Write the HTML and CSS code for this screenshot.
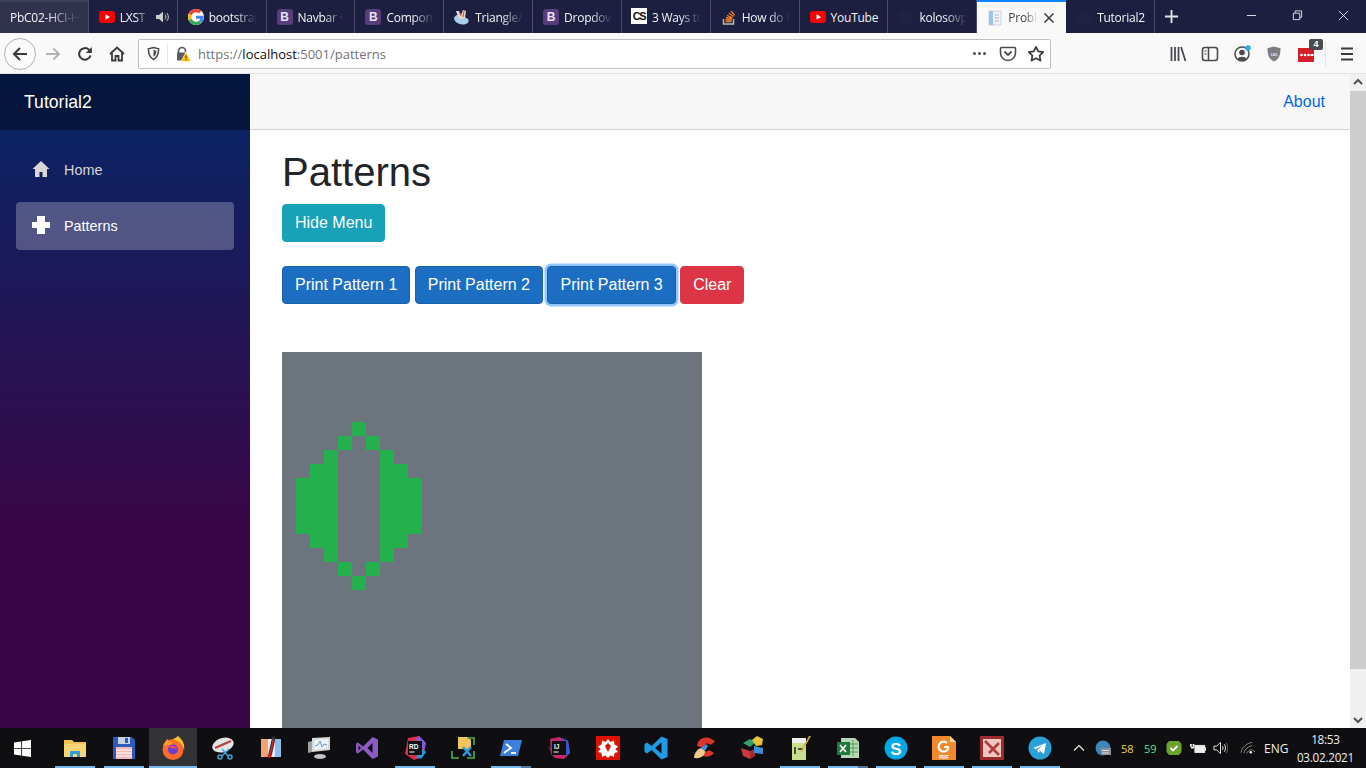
FILE: index.html
```html
<!DOCTYPE html>
<html lang="en">
<head>
<meta charset="utf-8">
<title>Tutorial2</title>
<link rel="stylesheet" href="styles.css">
</head>
<body>
<div class="desktop">
  <div class="tabbar">
    <div class="tab tab-hover"><span class="tab-title">PbC02-HCI-H</span></div>
    <div class="tab">
      <svg class="fav" viewBox="0 0 16 16"><rect y="2" width="16" height="12" rx="3" fill="#f00"/><path d="M6.5 5.2v5.6L11 8z" fill="#fff"/></svg>
      <span class="tab-title tab-title-short">LXST</span>
      <svg class="speaker" viewBox="0 0 14 14"><path d="M1 5h3l4-3.5v11L4 9H1z" fill="#ccc"/><path d="M10 4.5c1.2 1.4 1.2 3.6 0 5M11.8 3c2 2.2 2 5.800 0 8" fill="none" stroke="#ccc"/></svg>
    </div>
    <div class="tab">
      <svg class="fav" viewBox="0 0 48 48"><circle cx="24" cy="24" r="24" fill="#fff"/><path fill="#EA4335" d="M24 9.500c3.540 0 6.710 1.220 9.210 3.600l6.850-6.850C35.900 2.380 30.470 0 24 0 14.620 0 6.510 5.380 2.560 13.220l7.980 6.190C12.430 13.720 17.740 9.500 24 9.500z"/><path fill="#4285F4" d="M46.980 24.550c0-1.570-.15-3.090-.38-4.550H24v9.020h12.940c-.58 2.960-2.260 5.480-4.780 7.180l7.730 6c4.510-4.180 7.090-10.360 7.090-17.650z"/><path fill="#FBBC05" d="M10.530 28.590c-.48-1.450-.76-2.990-.76-4.590s.27-3.140.76-4.590l-7.980-6.190C.92 16.460 0 20.120 0 24c0 3.880.92 7.540 2.560 10.780l7.970-6.190z"/><path fill="#34A853" d="M24 48c6.480 0 11.930-2.130 15.890-5.810l-7.730-6c-2.150 1.450-4.920 2.300-8.160 2.300-6.260 0-11.570-4.220-13.470-9.910l-7.980 6.190C6.510 42.620 14.620 48 24 48z"/></svg>
      <span class="tab-title">bootstrap</span>
    </div>
    <div class="tab"><span class="bs-icon">B</span><span class="tab-title">Navbar ·</span></div>
    <div class="tab"><span class="bs-icon">B</span><span class="tab-title">Components</span></div>
    <div class="tab">
      <svg class="fav" viewBox="0 0 16 16"><path d="M0 9c1-3 4-4 7-3l7 4c2 3-1 5.500-5 5.500-5 0-9-3-9-6.500z" fill="#a9cdea"/><path d="M2 2l3 0 2 4 2-5 3 1-1 7-6 1z" fill="#e8d6c8"/><path d="M5 2l2 5M10 2L9 8" stroke="#b5543f" fill="none"/></svg>
      <span class="tab-title">Triangle/</span>
    </div>
    <div class="tab"><span class="bs-icon">B</span><span class="tab-title">Dropdown</span></div>
    <div class="tab"><span class="cs-icon">CS</span><span class="tab-title">3 Ways to</span></div>
    <div class="tab">
      <svg class="fav" viewBox="0 0 16 16"><path d="M2.500 10v5h10v-5" fill="none" stroke="#bcbbbb" stroke-width="1.500"/><path d="M4.500 12.500h6M4.600 10.500l6 .6M5 8.500l5.900 1.300M6 6.300l5.500 2.500M7.800 4l4.800 3.500M10 1.800l3.600 4.500" stroke="#f48024" stroke-width="1.300" fill="none"/></svg>
      <span class="tab-title">How do I</span>
    </div>
    <div class="tab">
      <svg class="fav" viewBox="0 0 16 16"><rect y="2" width="16" height="12" rx="3" fill="#f00"/><path d="M6.500 5.200v5.600L11 8z" fill="#fff"/></svg>
      <span class="tab-title tab-title-full">YouTube</span>
    </div>
    <div class="tab">
      <svg class="fav" viewBox="0 0 16 16"><circle cx="8" cy="8" r="7.500" fill="#1f2240"/></svg>
      <span class="tab-title">kolosovpetro</span>
    </div>
    <div class="tab tab-active">
      <svg class="fav" viewBox="0 0 16 16"><path d="M2 1h12v14H2z" fill="#eef1f5" stroke="#c4cbd6" stroke-width=".8"/><path d="M2 1h4v14H2z" fill="#9cc3ea"/><path d="M8 5h4M8 8h4M8 11h4" stroke="#b2b8c2"/></svg>
      <span class="tab-title">Problem</span>
      <svg class="tab-close" viewBox="0 0 12 12"><path d="M1.500 1.500l9 9M10.500 1.500l-9 9" stroke="#3a3a3f" stroke-width="1.500"/></svg>
    </div>
    <div class="tab">
      <svg class="fav" viewBox="0 0 16 16"><circle cx="8" cy="8" r="7.500" fill="#1f2240"/></svg>
      <span class="tab-title tab-title-nearfull">Tutorial2</span>
    </div>
    <svg class="newtab" viewBox="0 0 16 16"><path d="M8 1v14M1 8h14" stroke="#e3e3e8" stroke-width="2"/></svg>
    <div class="winctl">
      <div class="winbtn"><svg viewBox="0 0 12 12"><path d="M1 6h10" stroke="#e8e8ec"/></svg></div>
      <div class="winbtn"><svg viewBox="0 0 12 12"><path d="M3.500 3V1h7v7H8.500M1.500 3.500h7v7h-7z" fill="none" stroke="#e8e8ec"/></svg></div>
      <div class="winbtn"><svg viewBox="0 0 12 12"><path d="M1 1l10 10M11 1L1 11" stroke="#e8e8ec"/></svg></div>
    </div>
  </div>

  <div class="navbar">
    <div class="backbtn"><svg class="nav-ic" viewBox="0 0 16 16"><path d="M15 8H2M8 2L2 8l6 6" fill="none" stroke="#38383d" stroke-width="2"/></svg></div>
    <div class="navbtn navbtn-first"><svg class="nav-ic" viewBox="0 0 16 16"><path d="M1 8h13M8.500 2.500L14 8l-5.500 5.500" fill="none" stroke="#b2b2b4" stroke-width="1.800"/></svg></div>
    <div class="navbtn"><svg class="nav-ic" viewBox="0 0 16 16"><path d="M13.500 9.500A5.800 5.800 0 1 1 12 3.800L14 6" fill="none" stroke="#38383d" stroke-width="2"/><path d="M14.800 1v6h-6z" fill="#38383d"/></svg></div>
    <div class="navbtn"><svg class="nav-ic" viewBox="0 0 16 16"><path d="M1 8l7-6.500L15 8M3 7v7.500h3.500V10h3v4.500H13V7" fill="none" stroke="#38383d" stroke-width="1.800"/></svg></div>
    <div class="urlbar">
      <svg class="url-shield" viewBox="0 0 16 16"><path d="M8 1.500l5.500 1.500c0 5-1 9-5.500 11.500C3.500 12 2.500 8 2.500 3z" fill="none" stroke="#4a4a4f" stroke-width="1.600"/><path d="M8 4l3 1c0 3-.8 5-3 6.500z" fill="#4a4a4f"/></svg>
      <span class="url-sep"></span>
      <svg class="url-lock" viewBox="0 0 16 16"><path d="M3.500 7V5a3.500 3.500 0 0 1 7 0v1" fill="none" stroke="#5a5a5f" stroke-width="1.700"/><rect x="2" y="6.500" width="9" height="8" rx="1" fill="#5a5a5f"/><path d="M11 6l5 9.500H6z" fill="#ffbf00" stroke="#fff" stroke-width=".6"/><path d="M11 9.500v3M11 13.500v1" stroke="#3d2f00"/></svg>
      <span class="url-text">https://<b class="url-host">localhost</b>:5001/patterns</span>
      <span class="url-dots"><i></i><i></i><i></i></span>
      <svg class="url-act" viewBox="0 0 18 18"><path d="M2.500 2.500h13a1 1 0 0 1 1 1V8a7.500 7.500 0 0 1-15 0V3.500a1 1 0 0 1 1-1z" fill="none" stroke="#4a4a4f" stroke-width="1.600"/><path d="M5.500 6.500L9 10l3.500-3.500" fill="none" stroke="#4a4a4f" stroke-width="1.800"/></svg>
      <svg class="url-act" viewBox="0 0 18 18"><path d="M9 1.800l2.200 4.600 5 .7-3.600 3.500.9 5L9 13.200l-4.500 2.400.9-5L1.800 7.100l5-.7z" fill="none" stroke="#38383d" stroke-width="1.700" stroke-linejoin="round"/></svg>
    </div>
    <div class="toolbar">
      <svg class="tool" viewBox="0 0 18 18"><path d="M2.500 2v14M6 2v14M9.500 2v14M12 2l4.500 14" stroke="#4a4a4f" stroke-width="1.800" fill="none"/></svg>
      <svg class="tool" viewBox="0 0 18 18"><rect x="1.500" y="2.500" width="15" height="13" rx="2.500" fill="none" stroke="#4a4a4f" stroke-width="1.600"/><path d="M7.500 3v12" stroke="#4a4a4f" stroke-width="1.600"/><path d="M3.500 6h2M3.500 9h2" stroke="#4a4a4f"/></svg>
      <svg class="tool" viewBox="0 0 18 18"><circle cx="9" cy="9" r="7" fill="none" stroke="#4a4a4f" stroke-width="1.500"/><circle cx="9" cy="7.500" r="2.800" fill="#4a4a4f"/><path d="M4.500 14c1-3 8-3 9 0-2 1.800-7 1.800-9 0z" fill="#4a4a4f"/><circle cx="15" cy="3" r="2.800" fill="#2aa9f0"/></svg>
      <svg class="tool" viewBox="0 0 18 18"><path d="M9 1.500l6.500 1.700c0 6-1 10.500-6.500 13.300C3.500 13.700 2.500 9.200 2.500 3.200z" fill="#7d7d82"/><text class="ub-text" x="9" y="10.800">uo</text></svg>
      <div class="ext">
        <svg class="ext-ic" viewBox="0 0 18 18"><path d="M1 3h16v14H1z" fill="#d32027"/><circle cx="4.500" cy="10" r="1.300" fill="#fff"/><circle cx="8" cy="10" r="1.300" fill="#fff"/><circle cx="11.500" cy="10" r="1.300" fill="#fff"/><path d="M13.500 9h3v2h-3z" fill="#fff"/></svg>
        <span class="badge">4</span>
      </div>
      <span class="tool-sep"></span>
      <svg class="tool tool-last" viewBox="0 0 18 18"><path d="M3 3.500h12M3 9h12M3 14.500h12" stroke="#38383d" stroke-width="1.800"/></svg>
    </div>
  </div>

  <div class="viewport">
    <aside class="sidebar">
      <div class="brand">Tutorial2</div>
      <nav class="side-nav">
        <a class="side-link">
          <span class="side-ic"><svg viewBox="0 0 18 18"><path d="M9 1L0.500 9H3v8h4.500v-5h3v5H15V9h2.500z" fill="#d7d7d7"/></svg></span>
          Home
        </a>
        <a class="side-link side-link-active">
          <span class="side-ic"><svg viewBox="0 0 18 18"><path d="M5 0h8v6h5v6h-5v6H5v-6H0V6h5z" fill="#fff"/></svg></span>
          Patterns
        </a>
      </nav>
    </aside>
    <main class="main">
      <div class="top-row"><a class="about">About</a></div>
      <div class="content">
        <h1 class="title">Patterns</h1>
        <button class="btn btn-info">Hide Menu</button>
        <div class="btn-row">
          <button class="btn btn-primary">Print Pattern 1</button>
          <button class="btn btn-primary">Print Pattern 2</button>
          <button class="btn btn-primary btn-focus">Print Pattern 3</button>
          <button class="btn btn-danger">Clear</button>
        </div>
        <svg class="board" viewBox="0 0 30 30" shape-rendering="crispEdges"><rect width="30" height="30" fill="#6c757d"/><path fill="#25b04e" d="M5 5h1v1H5zM4 6h1v1H4zM6 6h1v1H6zM3 7h1v1H3zM7 7h1v1H7zM2 8h2v1H2zM7 8h2v1H7zM1 9h3v4H1zM7 9h3v4H7zM2 13h2v1H2zM7 13h2v1H7zM3 14h1v1H3zM7 14h1v1H7zM4 15h1v1H4zM6 15h1v1H6zM5 16h1v1H5z"/></svg>
      </div>
    </main>
    <div class="scrollbar">
      <svg class="scroll-arrow" viewBox="0 0 16 17"><path d="M4 10l4-4 4 4" fill="none" stroke="#505050" stroke-width="2"/></svg>
      <div class="scroll-thumb"></div>
      <svg class="scroll-arrow" viewBox="0 0 16 17"><path d="M4 7l4 4 4-4" fill="none" stroke="#505050" stroke-width="2"/></svg>
    </div>
  </div>

  <div class="taskbar">
    <div class="start"><svg viewBox="0 0 16 16"><path d="M0 2.300l6.800-1v6.200H0zM7.600 1.200L16 0v7.500H7.600zM0 8.300h6.800v6.300L0 13.700zM7.600 8.300H16V16l-8.400-1.200z" fill="#fff"/></svg></div>
    <div class="task task-run"><svg viewBox="0 0 24 24"><path d="M1 4h8l2 2h12v15H1z" fill="#f0c24e"/><path d="M1 8h22v13H1z" fill="#f7d774"/><path d="M7 21v-5a1 1 0 0 1 1-1h8a1 1 0 0 1 1 1v5h-3v-3h-4v3z" fill="#2f9bd8"/></svg></div>
    <div class="task task-run task-second"><svg viewBox="0 0 24 24"><path d="M1 1h19l3 3v19H1z" fill="#2b5cb8"/><path d="M6 1h12v7H6z" fill="#c9d2e4"/><path d="M13 2h3v5h-3z" fill="#2b5cb8"/><path d="M4 11h16v12H4z" fill="#f5b8b8"/><path d="M4 14h16M4 17h16M4 20h16" stroke="#fff"/></svg></div>
    <div class="task task-run task-active"><svg viewBox="0 0 24 24"><circle cx="12" cy="13.500" r="10.500" fill="#ff6a2b"/><path d="M12 3c5-2 4-3 5-3 5 4 7 9 6 14-1-4-3-7-5-8z" fill="#ffbd30"/><path d="M2 10c1-3 3-6 5-7 0 2 1 3 4 3 1 2-1 3-3 3z" fill="#ff9a2e"/><circle cx="12" cy="13.500" r="5" fill="#6a3fd0"/><path d="M8 11c3-2 7-1 8 2-3-1-5 0-8-2z" fill="#ff4f5e"/></svg></div>
    <div class="task"><svg viewBox="0 0 24 24"><ellipse cx="12" cy="9" rx="11" ry="7" fill="#e4e4e4" transform="rotate(-18 12 9)"/><path d="M4 12L20 5" stroke="#c8383c" stroke-width="2"/><path d="M9 9c3-1 6-3 9-3" stroke="#b06060"/><path d="M11 13l6 7M18 13l-7 7" stroke="#3ba7d9" stroke-width="1.500"/><circle cx="9" cy="21" r="2" fill="none" stroke="#3ba7d9" stroke-width="1.500"/><circle cx="19" cy="21" r="2" fill="none" stroke="#3ba7d9" stroke-width="1.500"/></svg></div>
    <div class="task"><svg viewBox="0 0 24 24"><rect x="2" y="3" width="20" height="18" rx="2" fill="#e9edf2"/><path d="M2 3h7v18H2z" fill="#f2a36e"/><path d="M16 3h6v18h-6z" fill="#8dbdec"/><path d="M15 1l-4 18" stroke="#333" stroke-width="3.500"/><path d="M14.600 3l-3.800 17" stroke="#d8262c" stroke-width="1.500"/><circle cx="10.500" cy="20" r="2" fill="#c01f25"/></svg></div>
    <div class="task"><svg viewBox="0 0 24 24"><path d="M5 2l18-1v13L5 16z" fill="#d6d9dc"/><path d="M7 4l14-1v9L7 14z" fill="#eef1f4"/><path d="M8 10l3-1 2-4 2 6 2-3 3 1" fill="none" stroke="#6a9cc8"/><path d="M1 6l4-1v11l-4 1z" fill="#9fa3a7"/><ellipse cx="13" cy="20.500" rx="6" ry="2.500" fill="#c2c4c6"/></svg></div>
    <div class="task"><svg viewBox="0 0 24 24"><path d="M17.500 1L23 3.500v17L17.500 23 8 13.500 3 17.500 1 16.500v-9L3 6.500l5 4zM17.500 7L12.500 12l5 5zM3.500 9.500v5L6 12z" fill="#8a5cc4" fill-rule="evenodd"/></svg></div>
    <div class="task task-run"><svg viewBox="0 0 24 24"><path d="M5 2l11-2 7 7-3 14-9 3-9-6z" fill="#d9304f"/><path d="M16 0l7 7-2 8-8-12z" fill="#7a5ce0"/><path d="M20 13l3 3-5 7-5-2z" fill="#1b9fe0"/><rect x="5" y="5" width="14" height="14" fill="#111"/><text class="ti-text" x="6" y="12.500">RD</text><path d="M6.500 16h5" stroke="#fff"/></svg></div>
    <div class="task"><svg viewBox="0 0 24 24"><path d="M7 1h10l3 3v9H7z" fill="#f0c65a"/><path d="M1 15v7h7M23 15v7h-7M16 2h7v7" fill="none" stroke="#4fae4e" stroke-width="1.600"/><path d="M12 11l8 9M20 11l-8 9" stroke="#2f9bd8" stroke-width="2.500"/></svg></div>
    <div class="task task-run task-stack"><svg viewBox="0 0 24 24"><path d="M5 4h18l-4 16H1z" fill="#3f7fdc"/><path d="M7 8l5 4-7 5" fill="none" stroke="#fff" stroke-width="1.800"/><path d="M12 17h5" stroke="#fff" stroke-width="1.800"/></svg></div>
    <div class="task"><svg viewBox="0 0 24 24"><path d="M3 3l9-2 9 4 2 12-6 6-9-1-4-4z" fill="#c2286b"/><path d="M15 2l6 3 2 12-4 3z" fill="#3557d8"/><path d="M1 10l5 10 4-2z" fill="#a3285f"/><rect x="5" y="5" width="14" height="14" fill="#111"/><text class="ti-text" x="7" y="12.500">IJ</text><path d="M6.500 16h5" stroke="#fff"/></svg></div>
    <div class="task"><svg viewBox="0 0 24 24"><rect width="24" height="24" fill="#dd1100"/><path d="M12 3l2.500 3 3.500-1.500.5 4 3.500 2-2.500 2.500 2.500 3-3.500 1-.5 4-3.500-1.500L12 22l-2.500-2.500L6 21l-.5-4L2 16l2.500-3L2 10.500l3.500-2 .5-4L9.500 6z" fill="#fff"/><path d="M12 7l3 3-3 6-3-6z" fill="#dd1100"/></svg></div>
    <div class="task"><svg viewBox="0 0 24 24"><path d="M17.500 0.500L23.500 3v18l-6 2.500L7.500 14 3 17.500 0.500 16V8L3 6.500 7.500 10zM17.500 6.500L11 12l6.500 5.500z" fill="#1f9ce6" fill-rule="evenodd"/></svg></div>
    <div class="task"><svg viewBox="0 0 24 24"><path d="M23 6C18-1 6 0 5 10l7 2c0-4 3-6 6-3z" fill="#d8362a"/><path d="M6 16c3 5 11 7 16 1l-5-3c-2 2-4 2-6 0z" fill="#d8362a"/><path d="M2 22c0-5 4-10 8-10l3 3c0 4-3 8-11 7z" fill="#f0c98e"/><path d="M9 12l5-4 2 2-3 5z" fill="#3f8fd8"/></svg></div>
    <div class="task"><svg viewBox="0 0 24 24"><path d="M3 7l7-4 6 3-6 5z" fill="#36a06c"/><path d="M12 4l5-4 6 3-1 6-6 1z" fill="#e8c33a"/><path d="M1 12l9 3v8l-7-3z" fill="#c8383c"/><path d="M10 15l5-2v7l-5 3z" fill="#a52a30"/><path d="M14 10l9 2v6l-9-1z" fill="#3f8fd8"/></svg></div>
    <div class="task task-run"><svg viewBox="0 0 24 24"><path d="M4 2h14v22H4z" fill="#c8e08c"/><path d="M4 2h14v5H4z" fill="#eee"/><path d="M7 11v7M10 13h5" stroke="#222" stroke-width="1.500"/><path d="M23 0l-8 14-2 3 1-4 7-13z" fill="#d8a83a"/></svg></div>
    <div class="task task-run task-stack"><svg viewBox="0 0 24 24"><path d="M5 2h14l4 4v16H5z" fill="#b7d8b4"/><path d="M13 8h9M13 12h9M13 16h9M17 4v16" stroke="#5a9a5a"/><path d="M1 6h13v13H1z" fill="#1d7a3e"/><path d="M4 9l6 7M10 9l-6 7" stroke="#fff" stroke-width="1.800"/></svg></div>
    <div class="task task-run"><svg viewBox="0 0 24 24"><circle cx="12" cy="12" r="11.500" fill="#00a8e6"/><text class="skype-text" x="12" y="18.500">S</text></svg></div>
    <div class="task task-run"><svg viewBox="0 0 24 24"><path d="M0 0h18l6 6v18H0z" fill="#f28a2c"/><path d="M18 0l6 6h-6z" fill="#fbd7a8"/><path d="M15 7a5 5 0 1 0 1 6v-2h-4" fill="none" stroke="#fff" stroke-width="2.200"/><text class="pdf-text" x="12" y="22.500">PDF</text></svg></div>
    <div class="task task-run"><svg viewBox="0 0 24 24"><rect width="24" height="24" fill="#9c2b2b"/><rect x="3" y="3" width="18" height="18" fill="#eec7c0"/><path d="M5 5l14 14M19 7L9 17" stroke="#b23a3a" stroke-width="2.500"/></svg></div>
    <div class="task task-run"><svg viewBox="0 0 24 24"><circle cx="12" cy="12" r="11.500" fill="#2b9fd8"/><path d="M5 12l13-5-2 11-4-3-2 2-.5-3.500 6-5-7.500 4.500z" fill="#fff"/></svg></div>
    <div class="tray">
      <svg class="tray-chev" viewBox="0 0 12 12"><path d="M1 8.500L6 3.500l5 5" fill="none" stroke="#eee" stroke-width="1.200"/></svg>
      <svg class="tray-globe" viewBox="0 0 16 16"><circle cx="8" cy="8" r="7.500" fill="#3f87b8"/><path d="M5 8h11v7H7z" fill="#8b9096"/><path d="M7 10.500h7M7 13h7" stroke="#ddd"/></svg>
      <span class="tray-num tray-yellow">58</span>
      <span class="tray-num tray-green">59</span>
      <svg class="tray-shield" viewBox="0 0 16 16"><path d="M3 1h10l2.500 3v8L13 15H3L.5 12V4z" fill="#6ca32f"/><path d="M4.500 8l2.500 2.500 4.500-4.500" fill="none" stroke="#fff" stroke-width="1.800"/></svg>
      <svg class="tray-batt" viewBox="0 0 18 14"><path d="M0 2h2v3H0zM3 2h2v3H3z" fill="#eee"/><path d="M1 5h3.500v2H1z" fill="#eee"/><rect x="5.500" y="3.500" width="11" height="8" fill="#eee" stroke="#eee"/><path d="M16.500 5.500H18v4h-1.500z" fill="#eee"/></svg>
      <svg class="tray-vol" viewBox="0 0 16 14"><path d="M1 5h3l4-4v12L4 9H1z" fill="none" stroke="#eee"/><path d="M10 5c1 1 1 3 0 4M12 3c1.800 2 1.800 6 0 8" fill="none" stroke="#eee"/><path d="M14 1.500c2.400 3 2.400 8 0 11" fill="none" stroke="#777"/></svg>
      <svg class="tray-wifi" viewBox="0 0 16 14"><path d="M1 12C2 6 7 2 13 1M4 12.500c1-4 4-7 9-8M7 13c.7-2 3-4 6-4.500" fill="none" stroke="#8a8a8a"/><circle cx="11.500" cy="11.500" r="1.400" fill="#eee"/><path d="M14 9.500l1.500 1.500" stroke="#eee"/></svg>
      <span class="tray-lang">ENG</span>
      <div class="clock"><span>18:53</span><span>03.02.2021</span></div>
    </div>
  </div>
</div>
</body>
</html>
```

FILE: styles.css
```css
* { box-sizing: border-box; }
html, body { margin: 0; padding: 0; height: 100%; overflow: hidden; }
body { font-family: "Liberation Sans", Arial, sans-serif; font-size: 16px; color: #212529; background: #fff; }
.desktop { display: flex; flex-direction: column; width: 1366px; height: 768px; overflow: hidden; }

/* tab strip */
.tabbar { display: flex; align-items: stretch; height: 33px; background: #1c1f3f; font-family: "Open Sans", sans-serif; font-size: 12px; letter-spacing: -.25px; color: #f4f4f8; flex: none; }
.tab { position: relative; display: flex; align-items: center; gap: 5px; width: 88.85px; flex: none; padding: 1px 9px 0 10px; border-right: 1px solid #4a4d68; }
.tab-hover { background: #30324e; border-top: 2px solid #3d3f5a; padding-top: 0; }
.tab-active { background: #f9f9fa; color: #3c3c42; border-top: 2px solid #0a84ff; border-right: 0; padding: 0 10px; }
.tab-title { flex: 1; min-width: 0; white-space: nowrap; overflow: hidden; -webkit-mask-image: linear-gradient(to right, #000 55%, transparent 100%); mask-image: linear-gradient(to right, #000 55%, transparent 100%); }
.tab-title-full { -webkit-mask-image: none; mask-image: none; overflow: visible; }
.tab-title-nearfull { -webkit-mask-image: linear-gradient(to right, #000 65%, #777 100%); mask-image: linear-gradient(to right, #000 65%, #777 100%); }
.tab-title-short { flex: none; width: 29px; }
.fav { width: 16px; height: 16px; flex: none; }
.speaker { width: 14px; height: 14px; flex: none; margin-left: 1px; }
.tab-close { width: 12px; height: 12px; flex: none; margin-right: 1px; }
.bs-icon { width: 16px; height: 16px; flex: none; border-radius: 3px; background: #563d7c; color: #e8e2f2; font: bold 12px/16px "Liberation Sans", sans-serif; letter-spacing: 0; text-align: center; }
.cs-icon { width: 16px; height: 16px; flex: none; background: #fff; color: #111; font: bold 11px/16px "Liberation Sans", sans-serif; letter-spacing: -1.500px; text-align: center; margin: -3px 0 0 -1px; }
.newtab { width: 15px; height: 15px; margin: 9px 0 0 9px; flex: none; }
.winctl { display: flex; margin-left: auto; }
.winbtn { width: 46px; display: flex; align-items: center; justify-content: center; padding-bottom: 2px; }
.winbtn svg { width: 11px; height: 11px; }

/* toolbar */
.navbar { display: flex; align-items: center; height: 41px; background: #f9f9fa; border-bottom: 1px solid #e2e2e4; padding: 1px 0 0 4px; flex: none; }
.backbtn { width: 32px; height: 32px; border-radius: 50%; border: 1px solid #b1b1b3; display: flex; align-items: center; justify-content: center; background: #fbfbfb; flex: none; }
.navbtn { width: 32px; height: 32px; display: flex; align-items: center; justify-content: center; flex: none; }
.navbtn-first { margin-left: 1px; }
.nav-ic { width: 16px; height: 16px; }
.urlbar { display: flex; align-items: center; width: 913px; height: 30px; margin-left: 5px; background: #fff; border: 1px solid #c0c0c2; border-radius: 2px; flex: none; }
.url-shield { width: 15px; height: 15px; margin-left: 7px; flex: none; }
.url-sep { width: 1px; height: 20px; background: #e6e6e8; margin-left: 6px; flex: none; }
.url-lock { width: 16px; height: 16px; margin-left: 7px; flex: none; }
.url-text { margin-left: 7px; font-family: "Open Sans", sans-serif; font-size: 13px; color: #737373; white-space: nowrap; }
.url-host { font-weight: 400; color: #0c0c0d; }
.url-dots { display: flex; gap: 2px; margin-left: auto; margin-right: 3px; }
.url-dots i { width: 3px; height: 3px; border-radius: 50%; background: #4a4a4f; }
.url-act { width: 18px; height: 18px; margin-left: 10px; flex: none; }
.url-act:last-child { margin-right: 5px; }
.toolbar { display: flex; align-items: center; flex: 1; padding-left: 118px; }
.tool { width: 18px; height: 18px; flex: none; margin-right: 14px; }
.tool-last { margin-right: 0; }
.ub-text { font: 6px "Liberation Sans", sans-serif; fill: #fff; text-anchor: middle; }
.ext { position: relative; width: 18px; height: 18px; margin-right: 10px; flex: none; }
.ext-ic { display: block; width: 18px; height: 18px; }
.badge { position: absolute; right: -8px; top: -6px; width: 14px; height: 11px; border-radius: 2px; background: #4a4a4f; color: #fff; font: bold 9px/11px "Liberation Sans", sans-serif; text-align: center; }
.tool-sep { width: 1px; height: 26px; background: #e4e4e6; margin-right: 12px; flex: none; }

/* page viewport */
.viewport { display: flex; flex: 1; min-height: 0; overflow: hidden; }
.sidebar { width: 250px; flex: none; background-image: linear-gradient(180deg, #052767 0%, #3a0647 70%); }
.brand { height: 56px; padding-left: 24px; background: rgba(0, 0, 0, .4); color: #fff; font-size: 17.6px; line-height: 56px; }
.side-nav { display: flex; flex-direction: column; gap: 8px; padding: 16px; }
.side-link { display: flex; align-items: center; height: 48px; padding-left: 16px; border-radius: 4px; color: #d7d7d7; font-size: 14.4px; }
.side-link-active { background: rgba(255, 255, 255, .25); color: #fff; }
.side-ic { display: flex; width: 32px; flex: none; }
.side-ic svg { width: 18px; height: 18px; margin-top: -2px; }
.main { flex: 1; min-width: 0; overflow: hidden; }
.top-row { display: flex; align-items: center; justify-content: flex-end; height: 56px; padding-right: 25px; background: #f7f7f7; border-bottom: 1px solid #d6d5d5; }
.about { color: #0366d6; font-size: 16px; }
.content { padding: 17.6px 0 0 32px; }
.title { margin: 0 0 8px; font-size: 40px; font-weight: 500; line-height: 48px; color: #212529; }
.btn { display: inline-block; height: 38px; padding: 6px 12px; border: 1px solid transparent; border-radius: 4px; color: #fff; font-family: inherit; font-size: 16px; line-height: 24px; vertical-align: top; }
.btn-info { background: #17a2b8; border-color: #17a2b8; }
.btn-primary { background: #1b6ec2; border-color: #1861ac; }
.btn-danger { background: #dc3545; border-color: #dc3545; }
.btn-focus { box-shadow: 0 0 0 2.500px rgba(38, 143, 255, .5); }
.btn-row { margin-top: 24px; height: 38px; }
.board { display: block; width: 420px; height: 420px; margin-top: 48px; }

/* page scrollbar */
.scrollbar { display: flex; flex-direction: column; width: 16px; flex: none; background: #f0f0f0; }
.scroll-arrow { display: block; width: 16px; height: 17px; flex: none; }
.scroll-thumb { height: 578px; background: #cdcdcd; margin-bottom: auto; }

/* taskbar */
.taskbar { display: flex; align-items: stretch; height: 40px; background: #0f0f11; flex: none; }
.start { width: 51px; display: flex; align-items: center; justify-content: center; padding-right: 6px; flex: none; }
.start svg { width: 17px; height: 17px; }
.task { position: relative; width: 48.06px; display: flex; align-items: center; justify-content: center; flex: none; }
.task svg { width: 24px; height: 24px; }
.task-second { margin-left: 1px; }
.task-run::after { content: ""; position: absolute; left: 4px; right: 4px; bottom: 0; height: 2px; background: #76b9ed; }
.task-stack::after { background: linear-gradient(to right, #76b9ed 76%, #54779a 76%); }
.task-active { background: #333335; margin: 0 2px 0 1px; }
.task-active::after { left: 0; right: 0; }
.ti-text { font: bold 6.500px "Liberation Sans", sans-serif; fill: #fff; }
.skype-text { font: bold 17px "Liberation Sans", sans-serif; fill: #fff; text-anchor: middle; }
.pdf-text { font: bold 5px "Liberation Sans", sans-serif; fill: #fff; text-anchor: middle; }
.tray { display: flex; align-items: center; flex: 1; padding-left: 9px; font-family: "Open Sans", sans-serif; font-size: 12px; color: #eee; }
.tray-chev { width: 12px; height: 12px; flex: none; margin-right: 10px; }
.tray-globe { width: 16px; height: 16px; flex: none; margin-right: 10px; }
.tray-num { width: 23px; flex: none; font-size: 11px; }
.tray-yellow { color: #f2d050; }
.tray-green { color: #58e08a; }
.tray-shield { width: 16px; height: 16px; flex: none; margin-left: -1px; margin-right: 8px; }
.tray-batt { width: 16px; height: 13px; flex: none; margin-right: 7px; }
.tray-vol { width: 15px; height: 14px; flex: none; margin-right: 12px; }
.tray-wifi { width: 15px; height: 14px; flex: none; margin-right: 9px; }
.tray-lang { flex: none; margin-right: 9px; }
.clock { display: flex; flex-direction: column; align-items: center; width: 56px; flex: none; line-height: 18px; font-size: 11.700px; letter-spacing: -.25px; }
```
